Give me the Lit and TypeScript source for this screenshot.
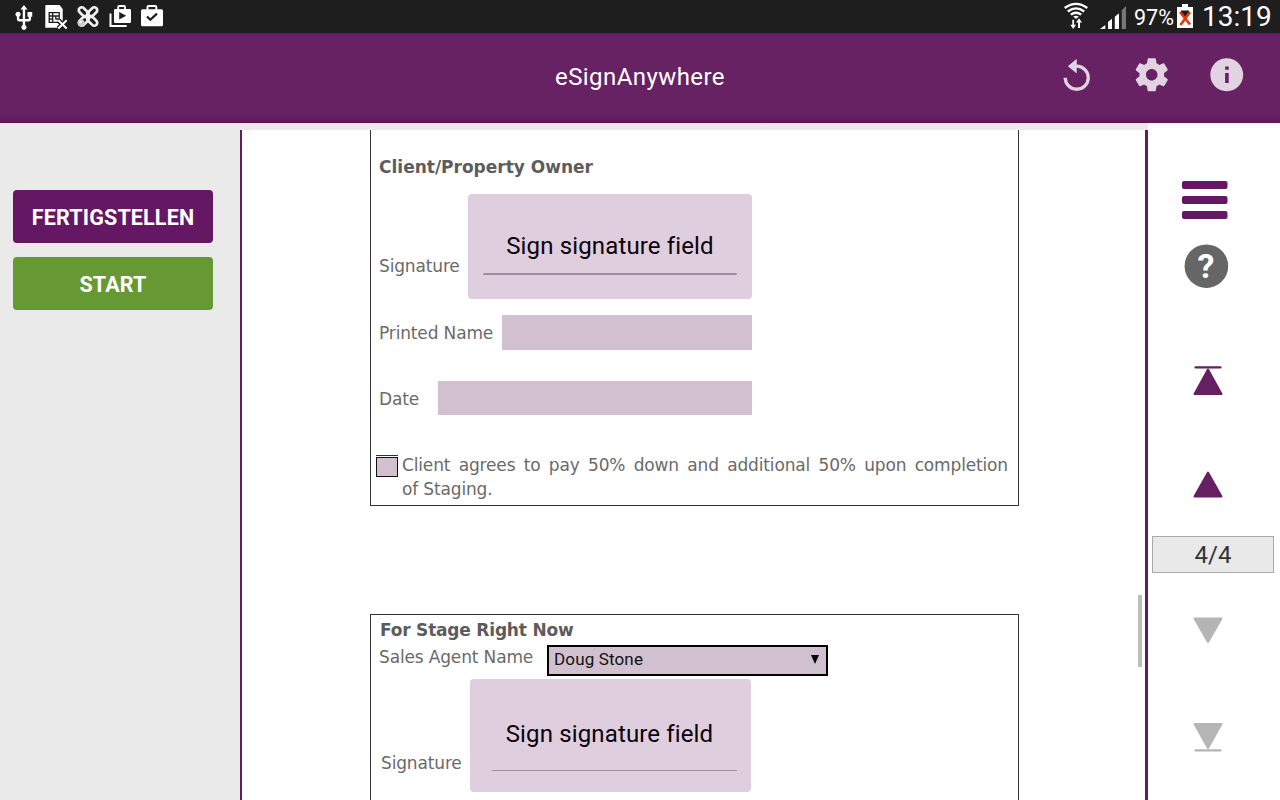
import { LitElement, type TemplateResult, html, css, svg } from "lit";
import { customElement, property } from "lit/decorators.js";

@customElement("status-bar")
export class StatusBar extends LitElement {
  render(): TemplateResult {
    return html`
      <div class="bar">
        <div class="group">
          <svg width="32" height="33" viewBox="0 0 32 33">
            <g transform="translate(1.8 3.7) scale(1.18)">
              <path fill="#fff" d="M15 7v4h1v2h-3V5h2l-3-4-3 4h2v8H8v-2.07c.7-.37 1.2-1.08 1.2-1.93 0-1.21-.99-2.2-2.2-2.2-1.21 0-2.2.99-2.2 2.2 0 .85.5 1.56 1.2 1.93V13c0 1.11.89 2 2 2h3v3.05c-.71.37-1.2 1.1-1.2 1.95 0 1.22.99 2.2 2.2 2.2 1.21 0 2.2-.98 2.2-2.2 0-.85-.49-1.58-1.2-1.95V15h3c1.11 0 2-.89 2-2v-2h1V7h-4z" />
            </g>
          </svg>
          <svg width="32" height="33" viewBox="0 0 32 33" fill="none">
            <path fill="#fff" d="M6 5h13.5l3.2 4v18.7H5.3V5.7z" />
            <path stroke="#1e1e1e" stroke-width="1.3" d="M9.2 12.7h10v9.6h-10zM9 16h3.6M9 19h3.6M12.7 12.5v10M15.8 15.8v3.6M15.8 16h3.5M15.8 19h3.5M12.7 16h3" />
            <path stroke="#1e1e1e" stroke-width="5" d="M18.5 20.5l8 8M26.5 20.5l-8 8" />
            <path stroke="#fff" stroke-width="2" d="M18.3 20.3l8.4 8.2M26.7 20.3l-8.4 8.2" />
          </svg>
          <svg width="32" height="33" viewBox="0 0 32 33" fill="none">
            <g stroke="#f0f0f0" stroke-width="2.7">
              <rect x="-2.9" y="-11.8" width="5.8" height="11.6" rx="2.9" transform="translate(16 16.5) rotate(45)" />
              <rect x="-2.9" y="-11.8" width="5.8" height="11.6" rx="2.9" transform="translate(16 16.5) rotate(135)" />
              <rect x="-2.9" y="-11.8" width="5.8" height="11.6" rx="2.9" transform="translate(16 16.5) rotate(225)" />
              <rect x="-2.9" y="-11.8" width="5.8" height="11.6" rx="2.9" transform="translate(16 16.5) rotate(315)" />
            </g>
            <circle cx="9.2" cy="23" r="3.4" fill="#c9c9c9" />
            <circle cx="8.4" cy="22" r="1.2" fill="#fff" />
          </svg>
          <svg width="32" height="33" viewBox="0 0 32 33" fill="none">
            <path stroke="#fff" stroke-width="2" d="M6.5 13.5V26h16.2" />
            <path stroke="#fff" stroke-width="1.8" d="M14.2 10V6.8q0-.8.8-.8h5.2q.8 0 .8.8V10" />
            <rect x="10" y="9" width="17" height="14" rx="1.2" fill="#fff" />
            <path fill="#1e1e1e" d="M15.2 12v7.500l7-3.750z" />
          </svg>
          <svg width="32" height="33" viewBox="0 0 32 33" fill="none">
            <path stroke="#fff" stroke-width="2" d="M11.5 11V7q0-1 1-1h6.8q1 0 1 1v4" />
            <rect x="5" y="9.3" width="22" height="17" rx="1.5" fill="#fff" />
            <path stroke="#1e1e1e" stroke-width="2.2" d="M11 16.500l3.300 3.300 6.700-6.200" />
          </svg>
        </div>
        <div class="group">
          <svg width="28" height="33" viewBox="0 0 28 33" fill="none">
            <g stroke="#fff" stroke-width="2.3">
              <path d="M2.700 8Q14-.2 25.300 8" />
              <path d="M5.800 11.500Q14 5.200 22.200 11.500" />
              <path d="M8.800 14.600Q14 10.800 19.200 14.600" />
            </g>
            <path fill="#fff" d="M11.200 16.600q2.800-1.800 5.600 0L14 19z" />
            <path fill="#fff" d="M10.300 19.700h1.800v5h2l-2.900 4.300-2.900-4.300h2zM17 18.300l3 4.200h-2v5.500h-2v-5.500h-2z" />
          </svg>
          <svg class="signal" width="26" height="33" viewBox="0 0 26 33">
            <path fill="#fff" d="M0 29l5.3-4v4zM8 29v-7l4-3.3V29zM14.800 29V16.700l4.200-3.500V29z" />
            <path fill="#777" d="M21.800 29V10.200L26 6v23z" />
          </svg>
          <span class="percent">97%</span>
          <svg class="battery" width="16" height="33" viewBox="0 0 16 33">
            <path fill="#fff" d="M0 7h5V4h6v3h5v21H0z" />
            <path fill="#1e1e1e" d="M4 10.500h8v4L8 18l-4-3z" />
            <path stroke="#e33a12" stroke-width="2.700" d="M3 12l10 12.500M13 12L3.500 25" />
          </svg>
          <span class="clock">13:19</span>
        </div>
      </div>
    `;
  }

  static styles = css`
    :host {
      display: block;
    }

    .bar {
      display: flex;
      justify-content: space-between;
      height: 33px;
      padding: 0 8px;
      background: #1e1e1e;
      color: #fff;
      font-family: Roboto, sans-serif;
      line-height: 33px;
      white-space: nowrap;
    }

    .group {
      display: flex;
    }

    svg {
      display: block;
      flex: none;
    }

    .signal {
      margin: 0 8px 0 10px;
    }

    .percent {
      width: 43px;
      font-size: 21.5px;
      line-height: 36px;
    }

    .battery {
      margin-right: 9px;
    }

    .clock {
      width: 70px;
      font-size: 28px;
      line-height: 34px;
    }
  `;
}

@customElement("signature-field")
export class SignatureField extends LitElement {
  render(): TemplateResult {
    return html`
      <div class="text">Sign signature field</div>
      <div class="line"></div>
    `;
  }

  static styles = css`
    :host {
      display: flex;
      flex-direction: column;
      box-sizing: border-box;
      border-radius: 4px;
      background: #dfcede;
      color: #0a000a;
      font-family: Roboto, sans-serif;
    }

    .text {
      font-size: 24px;
      line-height: 28px;
      letter-spacing: 0.14px;
      text-align: center;
      white-space: nowrap;
    }

    .line {
      height: var(--line-height, 2px);
      margin: var(--line-margin, 13px 0 0);
      border-radius: 1px;
      background: #a08ca2;
    }
  `;
}

const pagerShapes = {
  first: svg`<path d="M2 2.300h25" stroke-width="2.300" /><path class="solid" d="M14.500 4.500L28 29h-27z" />`,
  previous: svg`<path class="solid" d="M14.500 3.500L28 27.500h-27z" />`,
  next: svg`<path class="solid" d="M1 3.500h27L14.500 27z" />`,
  last: svg`<path class="solid" d="M1 2h27L14.500 26z" /><path d="M2 28.300h25" stroke-width="2.300" />`,
};

@customElement("pager-icon")
export class PagerIcon extends LitElement {
  @property() shape: keyof typeof pagerShapes = "next";

  render(): TemplateResult {
    return html`<svg width="30" height="31" viewBox="-.5 0 30 31">${pagerShapes[this.shape]}</svg>`;
  }

  static styles = css`
    :host {
      display: block;
      color: #661f63;
    }

    :host([disabled]) {
      color: #b5b5b5;
    }

    svg {
      display: block;
      stroke: currentColor;
      stroke-linecap: round;
      stroke-linejoin: round;
    }

    .solid {
      fill: currentColor;
      stroke-width: 2;
    }
  `;
}

@customElement("app-root")
export class AppRoot extends LitElement {
  render(): TemplateResult {
    return html`
      <status-bar></status-bar>
      <header class="header">
        <div class="title">eSignAnywhere</div>
        <div class="actions">
          <svg viewBox="0 0 24 24">
            <path d="M12 5.800V2.300L6.600 6.900l5.400 4.300V7.800a6 6 0 1 1-6 6H4a8 8 0 1 0 8-8z" />
          </svg>
          <svg viewBox="0 0 24 24">
            <path d="M19.43 12.98c.04-.32.07-.64.07-.98s-.03-.66-.07-.98l2.11-1.65c.19-.15.24-.42.12-.64l-2-3.46c-.12-.22-.39-.3-.61-.22l-2.49 1c-.52-.4-1.08-.73-1.69-.98l-.38-2.65C14.46 2.18 14.25 2 14 2h-4c-.25 0-.46.18-.49.42l-.38 2.65c-.61.25-1.17.59-1.69.98l-2.49-1c-.23-.09-.49 0-.61.22l-2 3.46c-.13.22-.07.49.12.64l2.11 1.65c-.04.32-.07.65-.07.98s.03.66.07.98l-2.11 1.65c-.19.15-.24.42-.12.64l2 3.46c.12.22.39.3.61.22l2.49-1c.52.4 1.08.73 1.69.98l.38 2.65c.03.24.24.42.49.42h4c.25 0 .46-.18.49-.42l.38-2.65c.61-.25 1.17-.59 1.69-.98l2.49 1c.23.09.49 0 .61-.22l2-3.46c.12-.22.07-.49-.12-.64l-2.11-1.65zM12 15.500c-1.93 0-3.500-1.570-3.500-3.500s1.570-3.500 3.500-3.500 3.500 1.570 3.500 3.500-1.570 3.500-3.500 3.500z" />
          </svg>
          <svg viewBox="0 0 24 24">
            <path d="M12 2C6.480 2 2 6.480 2 12s4.480 10 10 10 10-4.480 10-10S17.520 2 12 2zm1.200 15h-2.200v-6h2.200v6zm0-8h-2.200V7h2.200v2z" />
          </svg>
        </div>
      </header>

      <div class="body">
        <div class="workspace">
          <aside class="sidebar">
            <button class="button finish">FERTIGSTELLEN</button>
            <button class="button start">START</button>
          </aside>

          <main class="document">
            <section class="box client">
              <div class="heading">Client/Property Owner</div>
              <div class="row client-signature">
                <span class="label">Signature</span>
                <signature-field></signature-field>
              </div>
              <div class="row printed-name">
                <span class="label">Printed Name</span>
                <div class="input"></div>
              </div>
              <div class="row date">
                <span class="label">Date</span>
                <div class="input"></div>
              </div>
              <div class="agreement">
                <div class="check"></div>
                <div class="terms">
                  <div class="justified">Client agrees to pay 50% down and additional 50% upon completion</div>
                  <div>of Staging.</div>
                </div>
              </div>
            </section>

            <section class="box agent">
              <div class="heading">For Stage Right Now</div>
              <div class="row agent-name">
                <span class="label">Sales Agent Name</span>
                <div class="select">
                  <span>Doug Stone</span>
                  <svg width="8" height="9" viewBox="0 0 8 9"><path d="M0 0h8L4 9z" /></svg>
                </div>
              </div>
              <div class="row agent-signature">
                <span class="label">Signature</span>
                <signature-field></signature-field>
              </div>
            </section>
            <div class="thumb"></div>
          </main>
        </div>

        <nav class="pager">
          <svg class="menu" width="46" height="38" viewBox="0 0 46 38">
            <rect width="45.5" height="8" y="0" rx="2" />
            <rect width="45.5" height="8" y="15" rx="2" />
            <rect width="45.5" height="8" y="30" rx="2" />
          </svg>
          <svg class="help" width="45" height="44" viewBox="0 0 45 44">
            <circle cx="22.4" cy="22.2" r="21.8" />
            <text x="22" y="34" text-anchor="middle">?</text>
          </svg>
          <pager-icon class="first" shape="first"></pager-icon>
          <pager-icon class="previous" shape="previous"></pager-icon>
          <div class="count">4/4</div>
          <pager-icon class="next" shape="next" disabled></pager-icon>
          <pager-icon class="last" shape="last" disabled></pager-icon>
        </nav>
      </div>
    `;
  }

  static styles = css`
    :host {
      display: flex;
      flex-direction: column;
      width: 1280px;
      height: 800px;
      overflow: hidden;
      background: #fff;
      font-family: Roboto, sans-serif;
    }

    .header {
      display: grid;
      grid-template-columns: 1fr auto 1fr;
      height: 90px;
      background: linear-gradient(#5f1e5d, #672264 5px, #672264 80px, #641a61 87px, #5f1560);
      color: #fff;
    }

    .title {
      grid-column: 2;
      font-size: 24px;
      line-height: 88px;
      letter-spacing: 0.42px;
    }

    .actions {
      display: flex;
      justify-content: flex-end;
      gap: 35.5px;
      padding: 22px 34px 0 0;
    }

    .actions svg {
      width: 39.5px;
      height: 39.5px;
      fill: #e1d3e1;
    }

    .body {
      display: flex;
      flex: 1;
      min-height: 0;
    }

    .workspace {
      display: flex;
      width: 1148px;
      box-sizing: border-box;
      padding-top: 7px;
      background: #eaeaea;
    }

    .sidebar {
      display: flex;
      flex-direction: column;
      gap: 13.5px;
      width: 240px;
      box-sizing: border-box;
      padding: 60px 27px 0 13px;
    }

    .button {
      height: 53px;
      padding: 0;
      border: 0;
      border-radius: 4px;
      color: #fff;
      font: 700 21.5px/55px Roboto, sans-serif;
      letter-spacing: 0.15px;
    }

    .finish {
      background: #641763;
    }

    .start {
      background: #669933;
    }

    .document {
      position: relative;
      flex: 1;
      padding-left: 128px;
      overflow: hidden;
      border-left: 2px solid #641c61;
      border-right: 3px solid #5f1d5e;
      background: #fff;
      color: #6a6a6a;
      font-family: "DejaVu Sans", sans-serif;
      font-size: 17px;
      line-height: 24px;
      letter-spacing: -0.15px;
      white-space: nowrap;
    }

    .box {
      width: 649px;
      box-sizing: border-box;
      border: 1px solid #333;
    }

    .client {
      height: 376px;
      padding: 25px 0 0 8px;
      border-top: 0;
    }

    .agent {
      height: 300px;
      margin-top: 108px;
      padding: 3px 0 0 8px;
    }

    .heading {
      color: #5c5c5c;
      font-weight: 700;
      letter-spacing: 0;
    }

    .agent .heading {
      padding-left: 1px;
      letter-spacing: -0.2px;
    }

    .row {
      display: flex;
    }

    .input {
      background: #d0c0d0;
    }

    .client-signature {
      margin-top: 15px;
    }

    .client-signature .label {
      width: 89px;
      padding-top: 60px;
    }

    .client-signature signature-field {
      width: 284px;
      height: 105px;
      padding: 38px 15px 0;
    }

    .printed-name {
      margin-top: 16px;
    }

    .printed-name .label {
      width: 123px;
      padding-top: 6px;
    }

    .printed-name .input {
      width: 250px;
      height: 34.5px;
    }

    .date {
      margin-top: 31.5px;
    }

    .date .label {
      width: 59px;
      padding-top: 6px;
    }

    .date .input {
      width: 314px;
      height: 34px;
    }

    .agreement {
      display: flex;
      gap: 4px;
      margin: 40px 0 0 -3px;
    }

    .check {
      width: 22px;
      height: 20px;
      box-sizing: border-box;
      margin-top: 2px;
      border: 1px solid #111;
      background: #d0c0d0;
      box-shadow: 0 -1px #fff, 0 -2px #333;
    }

    .terms {
      width: 606px;
      margin-top: -2px;
    }

    .justified {
      text-align: justify;
      text-align-last: justify;
    }

    .agent-name .label {
      width: 168px;
      padding-top: 3px;
    }

    .select {
      display: flex;
      align-items: center;
      justify-content: space-between;
      width: 281px;
      height: 31px;
      box-sizing: border-box;
      margin-top: 3px;
      padding: 0 7px 2px 5px;
      border: 2px solid #000;
      background: #d0c0d0;
      color: #111;
      font: 17px/27px Roboto, sans-serif;
      letter-spacing: 0.15px;
    }

    .agent-signature {
      margin-top: 3px;
    }

    .agent-signature .label {
      width: 89px;
      padding: 72px 0 0 2px;
    }

    .agent-signature signature-field {
      width: 281px;
      height: 113px;
      padding: 41px 14px 0 12px;
      --line-height: 1px;
      --line-margin: 22px 0 0 10px;
    }

    .thumb {
      position: absolute;
      top: 465px;
      right: 3px;
      width: 4px;
      height: 72px;
      background: #bdbdb9;
    }

    .pager {
      display: flex;
      flex: 1;
      flex-direction: column;
      align-items: flex-start;
      padding-top: 58px;
    }

    .menu {
      margin-left: 34px;
      fill: #641763;
    }

    .help {
      margin: 25px 0 0 36px;
      fill: #666;
    }

    .help text {
      fill: #fff;
      font: 700 34px Roboto, sans-serif;
    }

    .pager pager-icon {
      margin-left: 44.5px;
    }

    .first {
      margin-top: 77px;
    }

    .previous {
      margin-top: 73px;
    }

    .count {
      width: 122px;
      height: 37px;
      box-sizing: border-box;
      margin: 36px 0 0 4px;
      border: 1px solid #aaa;
      background: #e9e9e9;
      color: #333;
      font-size: 24px;
      line-height: 36px;
      text-align: center;
    }

    .next {
      margin-top: 42px;
    }

    .last {
      margin-top: 76px;
    }
  `;
}
